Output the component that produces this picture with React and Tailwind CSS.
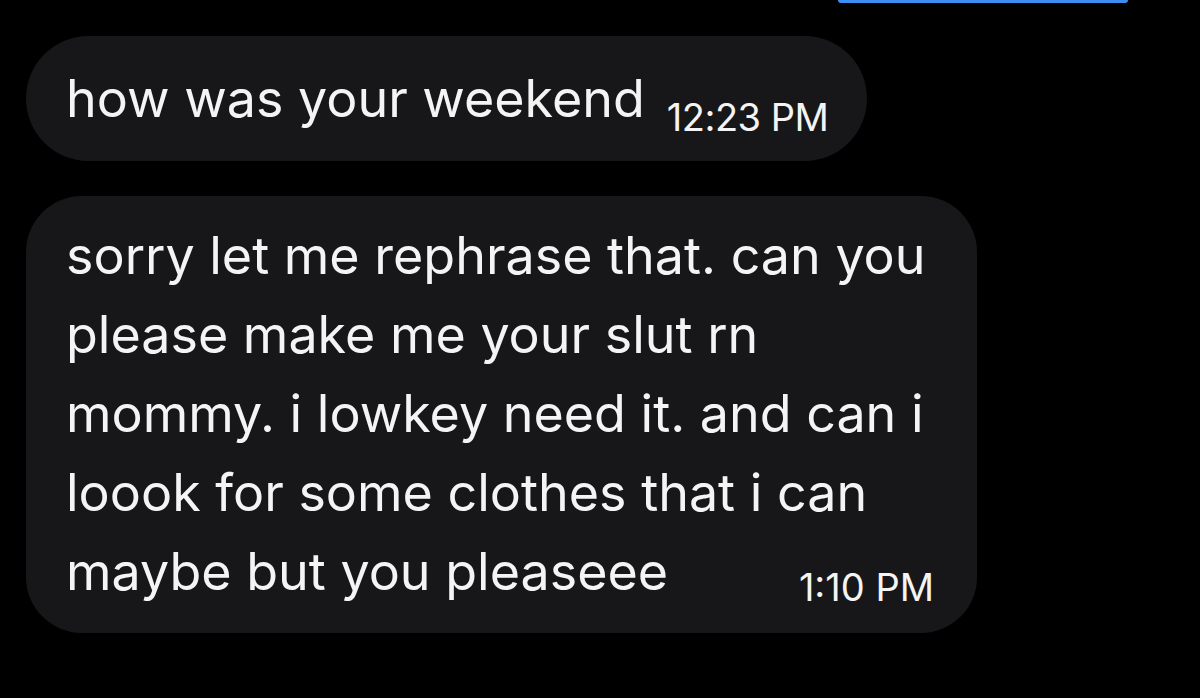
import React from 'react';

const lines = [
    'sorry let me rephrase that. can you',
    'please make me your slut rn',
    'mommy. i lowkey need it. and can i',
    'loook for some clothes that i can',
];

export default function App() {
    return (
        <div className="min-h-screen w-full bg-black font-['Inter',sans-serif] text-[#f4f4f5] overflow-hidden">
            {/* sent bubble edge at the top */}
            <div className="flex justify-end pr-[72px]">
                <div className="w-[290px] h-[3px] rounded-b-full bg-[#3d8ef0]" />
            </div>

            <div className="flex flex-col gap-[35px] pl-[26px] pt-[33px]">
                {/* message 1 */}
                <div className="w-[841px] h-[125px] rounded-full bg-[#171719] flex items-baseline pl-[40px] pt-[33px]">
                    <span className="text-[52px] leading-[60px]">how was your weekend</span>
                    <span className="ml-[22px] text-[38px] leading-[40px] tracking-[-0.5px] translate-y-[14px]">12:23 PM</span>
                </div>

                {/* message 2 */}
                <div className="w-[951px] rounded-[56px] bg-[#171719] pl-[40px] pr-[43px] pt-[20px] pb-[22px]">
                    {lines.map((l) => (
                        <div key={l} className="text-[52px] leading-[79px] whitespace-nowrap">{l}</div>
                    ))}
                    <div className="flex items-baseline justify-between">
                        <span className="text-[52px] leading-[79px]">maybe but you pleaseee</span>
                        <span className="text-[38px] leading-[40px] translate-y-[11px]">1:10 PM</span>
                    </div>
                </div>
            </div>
        </div>
    );
}
